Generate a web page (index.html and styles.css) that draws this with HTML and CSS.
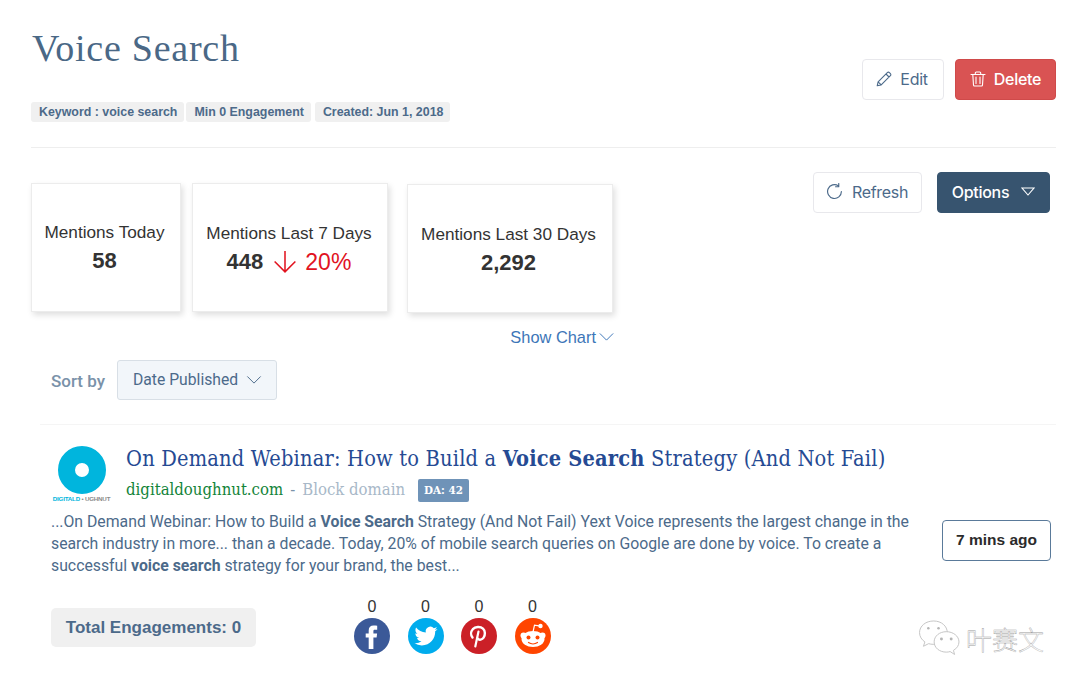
FILE: index.html
```html
<!DOCTYPE html>
<html lang="en">
<head>
<meta charset="utf-8">
<title>Voice Search</title>
<link rel="stylesheet" href="styles.css">
</head>
<body>
<main class="page">
  <header class="head">
    <div class="head-left">
      <h1 class="title">Voice Search</h1>
      <div class="tags">
        <span class="tag tag-first">Keyword : voice search</span>
        <span class="tag tag-second">Min 0 Engagement</span>
        <span class="tag">Created: Jun 1, 2018</span>
      </div>
    </div>
    <div class="head-actions">
      <button class="btn btn-edit">
        <svg class="ico" viewBox="0 0 16 16"><path d="M1.2 14.8l.9-4L11.3 1.600c.6-.6 1.500-.6 2.100 0l1 1c.6.6.6 1.500 0 2.100L5.200 13.900zM2.100 10.800l3.100 3.100M10 3l3 3"/></svg>
        Edit
      </button>
      <button class="btn btn-delete">
        <svg class="ico" viewBox="0 0 16 16"><path d="M1 3.500h14M5.300 3.500V2c0-.6.400-1 1-1h3.400c.6 0 1 .4 1 1v1.500M2.800 3.500l.7 10.500c0 .6.500 1 1 1h7c.5 0 1-.4 1-1l.7-10.500M6 6v6.500M10 6v6.500"/></svg>
        Delete
      </button>
    </div>
  </header>

  <section class="stats-row">
    <div class="stats">
      <div class="card card-a"><div class="card-label">Mentions Today</div><div class="card-value">58</div></div>
      <div class="card card-b"><div class="card-label">Mentions Last 7 Days</div><div class="card-value">448
        <svg class="arrow" viewBox="0 0 22 22"><path d="M11 1v19M1.500 10.500L11 20l9.500-9.500"/></svg><span class="drop">20%</span></div></div>
      <div class="card card-c"><div class="card-label">Mentions Last 30 Days</div><div class="card-value">2,292</div></div>
    </div>
    <div class="stats-actions">
      <button class="btn btn-refresh">
        <svg class="ico ico-refresh" viewBox="0 0 16 16"><path d="M14.500 8A6.500 6.500 0 1 1 11.700 2.700M12 .5v3H9"/></svg>
        Refresh
      </button>
      <button class="btn btn-options">
        Options
        <svg class="tri" viewBox="0 0 14 9"><path d="M1 1h12L7 8z"/></svg>
      </button>
    </div>
  </section>

  <div class="chart-link">Show Chart<svg class="chev" viewBox="0 0 16 9"><path d="M.5 .5L8 8l7.500-7.500"/></svg></div>

  <div class="sort">
    <span class="sort-label">Sort by</span>
    <div class="sort-select">Date Published<svg class="chev chev-sort" viewBox="0 0 16 9"><path d="M.5 .5L8 8l7.500-7.500"/></svg></div>
  </div>

  <article class="item">
    <div class="item-head">
      <div class="logo">
        <span class="logo-ring"></span>
        <span class="logo-text"><b>DIGITALD</b> • UGHNUT</span>
      </div>
      <div class="item-titles">
        <h2 class="item-title">On Demand Webinar: How to Build a <b>Voice Search</b> Strategy (And Not Fail)</h2>
        <div class="item-meta">
          <span class="domain">digitaldoughnut.com</span>
          <span class="dash">-</span>
          <span class="block">Block domain</span>
          <span class="da">DA: 42</span>
        </div>
      </div>
    </div>
    <div class="item-body">
      <p class="excerpt">...On Demand Webinar: How to Build a <b>Voice Search</b> Strategy (And Not Fail) Yext Voice represents the largest change in the search industry in more... than a decade. Today, 20% of mobile search queries on Google are done by voice. To create a successful <b>voice search</b> strategy for your brand, the best...</p>
      <div class="age">7 mins ago</div>
    </div>
    <div class="item-foot">
      <div class="total">Total Engagements: 0</div>
      <div class="socials">
        <div class="social"><span class="count">0</span>
          <svg class="disc" viewBox="0 0 36 36"><circle cx="18" cy="18" r="18" fill="#3b5998"/><path fill="#fff" d="M23.200 11.700h-2.500c-1 0-1.300.6-1.300 1.400v2.400h3.700l-.5 3.900h-3.200V31h-4.700V19.400h-3v-3.900h3v-2.900c0-3.200 1.900-5 4.800-5 1.400 0 2.500.1 3.700.2z"/></svg></div>
        <div class="social"><span class="count">0</span>
          <svg class="disc" viewBox="0 0 36 36"><circle cx="18" cy="18" r="18" fill="#00aced"/><g transform="translate(6.500 6.500) scale(.96)"><path fill="#fff" d="M23.953 4.570a10 10 0 01-2.825.775 4.958 4.958 0 002.163-2.723c-.951.555-2.005.959-3.127 1.184a4.920 4.920 0 00-8.384 4.482C7.690 8.095 4.067 6.130 1.640 3.162a4.822 4.822 0 00-.666 2.475c0 1.710.870 3.213 2.188 4.096a4.904 4.904 0 01-2.228-.616v.060a4.923 4.923 0 003.946 4.827 4.996 4.996 0 01-2.212.085 4.936 4.936 0 004.604 3.417 9.867 9.867 0 01-6.102 2.105c-.390 0-.779-.023-1.170-.067a13.995 13.995 0 007.557 2.209c9.053 0 13.998-7.496 13.998-13.985 0-.210 0-.420-.015-.630A9.935 9.935 0 0024 4.590z"/></g></svg></div>
        <div class="social"><span class="count">0</span>
          <svg class="disc" viewBox="0 0 36 36"><circle cx="18" cy="18" r="18" fill="#cb2027"/><path fill="none" stroke="#fff" stroke-width="2.400" stroke-linecap="round" d="M11.500 19.500c-2-2.500-1.800-6 .3-8.300 2.500-2.600 7.500-3 10.200-.6 2.500 2.200 2.300 6.500.6 9-1.300 2-4.500 3-6 .9"/><path fill="none" stroke="#fff" stroke-width="2.200" stroke-linecap="round" d="M17.500 13.500l-3.200 15"/></svg></div>
        <div class="social"><span class="count">0</span>
          <svg class="disc" viewBox="0 0 36 36"><circle cx="18" cy="18" r="18" fill="#ff4500"/><g fill="#fff"><circle cx="8.500" cy="17.500" r="3"/><circle cx="27.500" cy="17.500" r="3"/><ellipse cx="18" cy="21" rx="11.500" ry="8"/><circle cx="25.500" cy="8" r="2.200"/></g><path fill="none" stroke="#fff" stroke-width="1.200" d="M18 14l1.500-6.800 6 1"/><circle cx="13.500" cy="19.500" r="2" fill="#ff4500"/><circle cx="22.500" cy="19.500" r="2" fill="#ff4500"/><path fill="none" stroke="#ff4500" stroke-width="1.200" stroke-linecap="round" d="M13.500 24.500c2.500 1.700 6.500 1.700 9 0"/></svg></div>
      </div>
    </div>
  </article>

  <aside class="mark">
    <svg class="mark-icon" viewBox="0 0 44 38"><path class="mark-a" d="M16 1C8 1 1.500 6 1.500 13c0 4 2.200 7.300 5.500 9.500l-1.500 4.500 5.300-2.700c1.600.4 3 .7 4.700.7 8 0 14.500-5.300 14.500-12S24 1 16 1z"/><path class="mark-b" d="M29 12c-7 0-12.500 4.500-12.500 10.500S22 33 29 33c1.400 0 2.600-.2 3.900-.6l4.600 3-1.200-4.200c3.600-2 5.700-5.200 5.700-8.700C42 16.500 36 12 29 12z"/><circle cx="10.500" cy="8.500" r="1.300"/><circle cx="21" cy="8.500" r="1.300"/><circle cx="24" cy="19.500" r="1.500"/><circle cx="34" cy="19.500" r="1.500"/></svg>
    <span class="mark-text">叶赛文</span>
  </aside>
</main>
</body>
</html>
```

FILE: styles.css
```css
* { box-sizing: border-box; }
html, body { margin: 0; padding: 0; background: #fff; }
body {
  width: 1080px;
  height: 688px;
  overflow: hidden;
  font-family: "Liberation Sans", Arial, sans-serif;
  color: #333;
}
.page { position: relative; padding: 0 24px 0 31px; height: 688px; }

.head {
  display: flex;
  justify-content: space-between;
  height: 148px;
  border-bottom: 1px solid #eeeeee;
}
.title {
  margin: 0;
  padding: 26px 0 0 1px;
  height: 102px;
  font: 400 38px/44px "Liberation Serif", serif;
  letter-spacing: .75px;
  color: #4a6886;
}
.tags { display: flex; }
.tag {
  height: 20px;
  padding: 0 7px 0 8px;
  margin-right: 4px;
  background: #f0f0f0;
  border-radius: 3px;
  font: 700 12.400px/20px "Liberation Sans", sans-serif;
  color: #4c6a8a;
}
.tag-first { margin-right: 2px; }

.head-actions { display: flex; gap: 11px; padding-top: 59px; }
.btn {
  display: flex;
  align-items: center;
  justify-content: center;
  height: 41px;
  border-radius: 4px;
  border: 1px solid #e8e8ec;
  background: #fff;
  color: #4c6a8a;
  font: 400 16px/20px Inter, Roboto, sans-serif;
  letter-spacing: -.3px;
  padding: 0 0 2px;
}
.btn-edit { width: 82px; gap: 8px; padding-right: 2px; }
.btn-delete {
  width: 101px;
  gap: 8px;
  background: #d95353;
  border-color: #cf4a4a;
  color: #fff;
  font-weight: 500;
}
.ico { width: 16px; height: 16px; fill: none; stroke: currentColor; stroke-width: 1.100; stroke-linejoin: round; stroke-linecap: round; }

.stats-row {
  display: flex;
  justify-content: space-between;
  padding-right: 6px;
  padding-top: 24px;
}
.stats { display: flex; gap: 11px; margin-top: 11px; }
.card {
  height: 129px;
  background: #fff;
  border: 1px solid #ececec;
  box-shadow: 2px 3px 6px rgba(0, 0, 0, .13);
  display: flex;
  flex-direction: column;
  align-items: center;
}
.card-a { width: 150px; padding: 38px 3px 0 0; }
.card-b { width: 196px; padding: 39px 2px 0 0; }
.card-c { width: 206px; margin: 1px 0 0 8px; padding: 39px 3px 0 0; }
.card-label { font-size: 17.200px; line-height: 20px; }
.card-value {
  display: flex;
  align-items: center;
  font-weight: 700;
  font-size: 22px;
  line-height: 26px;
  margin-top: 6px;
}
.arrow { width: 24px; height: 24px; margin: 0 8px 0 10px; fill: none; stroke: #e1131f; stroke-width: 1.400; }
.drop { color: #e1131f; font-weight: 400; font-size: 23px; }

.stats-actions { display: flex; gap: 15px; }
.btn-refresh { width: 109px; gap: 9px; padding-right: 1px; }
.ico-refresh { width: 17px; height: 17px; }
.btn-options {
  width: 113px;
  gap: 12px;
  background: #37546f;
  border-color: #37546f;
  color: #fff;
  font-weight: 500;
}
.tri { width: 14px; height: 9px; fill: none; stroke: #fff; stroke-width: 1.100; }

.chart-link {
  display: flex;
  align-items: center;
  width: 583px;
  justify-content: flex-end;
  margin-top: 14px;
  height: 20px;
  font-size: 16.400px;
  color: #3d76b8;
}
.chev { width: 15px; height: 8px; margin-left: 3px; fill: none; stroke: #3d76b8; stroke-width: 1.100; }

.sort { display: flex; align-items: center; padding-left: 20px; margin-top: 13px; }
.sort-label { font: 500 17px/20px Roboto, sans-serif; color: #7a92a9; margin-top: 2px; }
.sort-select {
  display: flex;
  align-items: center;
  width: 160px;
  height: 40px;
  margin-left: 12px;
  padding-left: 15px;
  background: #f2f6fa;
  border: 1px solid #d8dfe6;
  border-radius: 3px;
  font: 400 15.700px/20px Roboto, sans-serif;
  color: #4c6a8a;
}
.chev-sort { width: 16px; margin-left: 8px; stroke: #4c6a8a; }

.item {
  margin: 24px 0 0 9px;
  border-top: 1px solid #f5f5f5;
}
.item-head { display: flex; padding: 21px 0 0 13px; }
.logo { width: 60px; height: 60px; display: flex; flex-direction: column; align-items: center; margin-right: 13px; padding-right: 3px; }
.logo-ring {
  display: block;
  width: 48px;
  height: 48px;
  border-radius: 50%;
  border: 17px solid #00b5dd;
  background: #fff;
}
.logo-text { font-size: 6.200px; line-height: 8px; color: #8a8a8a; white-space: nowrap; margin-top: 1px; font-weight: 700; letter-spacing: -.2px; }
.logo-text b { color: #00b5dd; }
.item-titles { flex: 1; }
.item-title {
  margin: 0;
  font: 400 21.600px/26px "DejaVu Serif", serif;
  font-stretch: condensed;
  letter-spacing: .2px;
  color: #254a93;
  white-space: nowrap;
}
.item-meta { display: flex; align-items: center; height: 24px; margin-top: 6px; font: 400 16.600px/20px "DejaVu Serif", serif; font-stretch: condensed; }
.domain { color: #13843a; }
.dash { color: #7a92a9; margin: 0 7px; }
.block { color: #a8b8c8; }
.da {
  margin-left: 13px;
  height: 23px;
  width: 51px;
  text-align: center;
  background: #6f93b8;
  border-radius: 2px;
  color: #fff;
  font: 700 11.500px/23px "DejaVu Serif", serif;
  font-stretch: condensed;
}

.item-body { display: flex; justify-content: space-between; padding-left: 11px; margin-top: 5px; }
.excerpt { margin: 0; width: 870px; font: 400 15.800px/22px Roboto, sans-serif; color: #4c6a8a; }
.excerpt b { font-weight: 700; }
.age {
  width: 109px;
  height: 41px;
  margin: 9px 5px 0 0;
  border: 1.500px solid #5a7a9a;
  border-radius: 4px;
  text-align: center;
  font: 700 15.500px/38px "Liberation Sans", sans-serif;
  color: #2b2b2b;
}

.item-foot { display: flex; align-items: flex-start; padding-left: 11px; margin-top: 20px; }
.total {
  width: 205px;
  height: 39px;
  margin-top: 11px;
  background: #f0f0f0;
  border-radius: 5px;
  text-align: center;
  font: 700 17px/40px "Liberation Sans", sans-serif;
  color: #4c6a8a;
}
.socials { display: flex; gap: 17.500px; margin-left: 98px; }
.social { display: flex; flex-direction: column; align-items: center; width: 36px; }
.count { font-size: 16px; line-height: 19px; color: #333; height: 21px; }
.disc { width: 36px; height: 36px; }

.mark { position: absolute; left: 918px; top: 620px; display: flex; align-items: center; gap: 5px; }
.mark-icon { width: 43px; height: 37px; fill: #b5b5b5; }
.mark-a, .mark-b { fill: #fff; stroke: #c4c4c4; stroke-width: 1; }
.mark-text {
  font: 200 26px/36px "Noto Sans CJK SC", sans-serif;
  color: #fff;
  -webkit-text-stroke: .4px #a0a0a0;
}
```
